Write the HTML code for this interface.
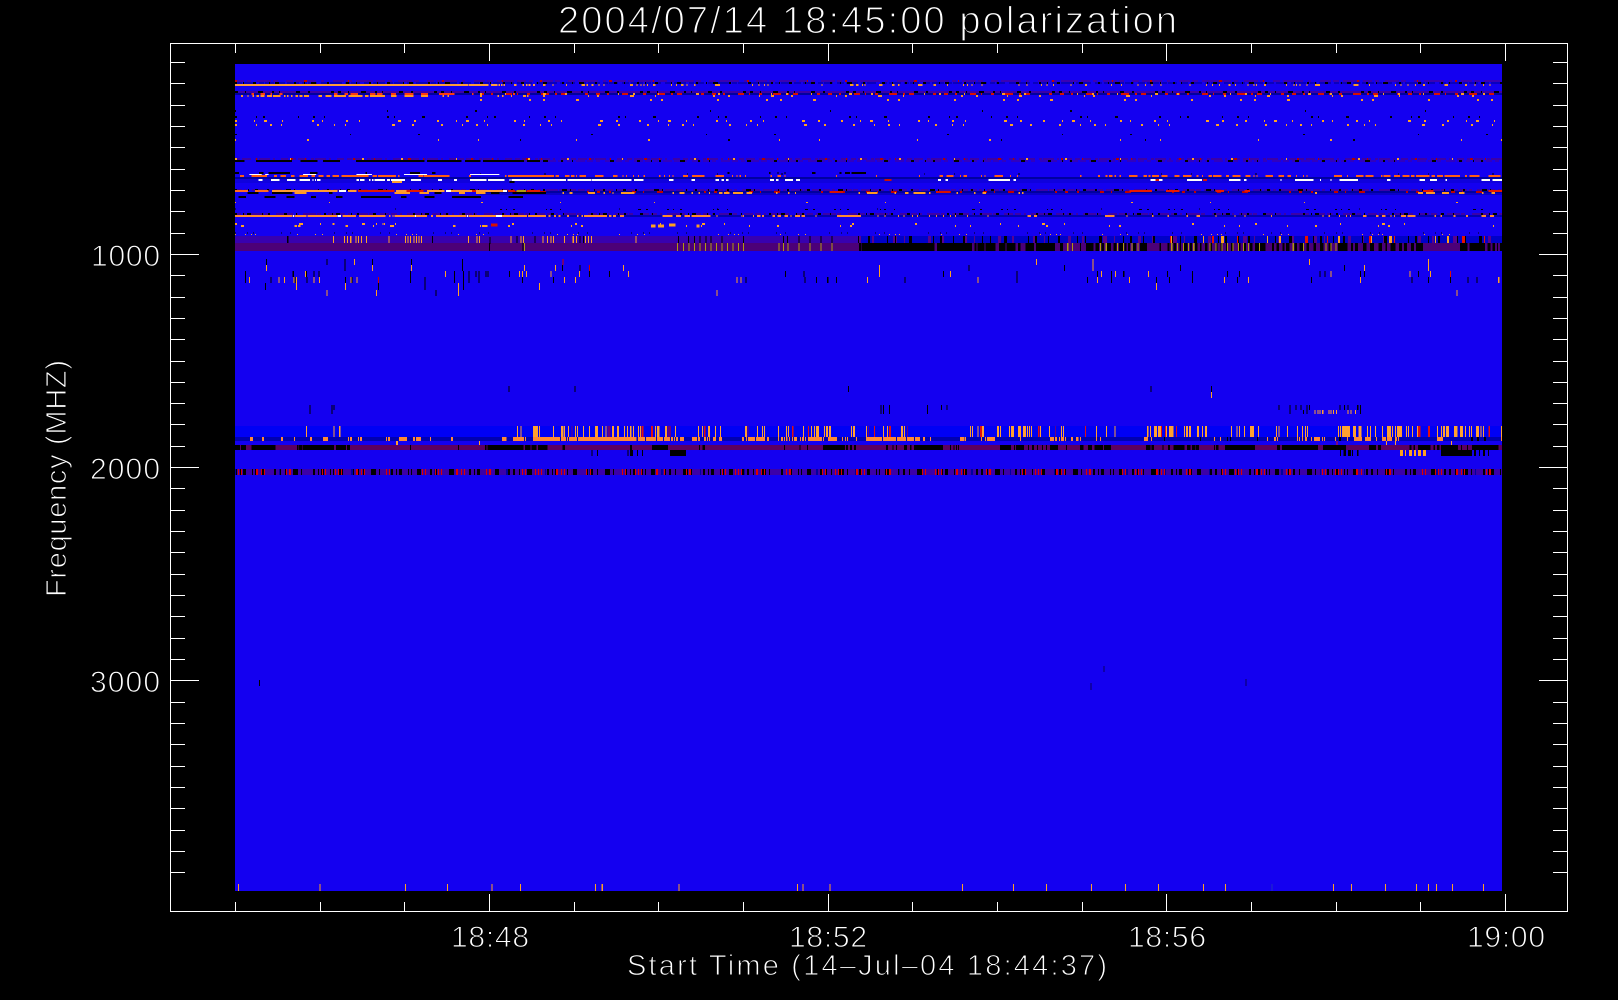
<!DOCTYPE html>
<html lang="en">
<head>
<meta charset="utf-8">
<title>2004/07/14 18:45:00 polarization</title>
<style>
html,body{margin:0;padding:0;background:#000;width:1618px;height:1000px;overflow:hidden}
svg{display:block}
text{font-family:"Liberation Sans",sans-serif;fill:#fff;stroke:#000;paint-order:normal}
</style>
</head>
<body>
<svg width="1618" height="1000" viewBox="0 0 1618 1000" xmlns="http://www.w3.org/2000/svg">
<rect width="1618" height="1000" fill="#000"/>
<g fill="none" shape-rendering="crispEdges">
<!-- plot base -->
<rect x="235" y="64" width="1267" height="827" fill="#1400f0"/>
<rect x="235" y="426" width="1267" height="11" fill="#0000f5"/>
<rect x="235" y="437" width="1267" height="4" fill="#0000b0"/>
<rect x="235" y="177" width="1267" height="6" fill="#0c00d0" opacity=".6"/>
<rect x="235" y="236" width="623" height="7" fill="#3800b0"/>
<rect x="235" y="243" width="1267" height="8" fill="#4c0078"/>
<rect x="235" y="445" width="1267" height="5" fill="#5c0060"/>
<rect x="235" y="469" width="1267" height="6" fill="#3c00a8"/>

<!-- top speckled rows, full width -->
<path d="M235 81H1502" stroke="#3a00b4" stroke-width="2" stroke-dasharray="9 3 4 6 14 2 5 8 7 3 20 5 3 9 11 2 6 4 17 3"/>
<path d="M235 83H1502" stroke="#0800c0" stroke-width="2" stroke-dasharray="7 2 12 3 5 1 9 4"/>
<path d="M235 83H1502" stroke="#000" stroke-width="2" stroke-dasharray="2 6 1 9 3 13 1 5 4 15 2 8 1 6 5 11 2 17 3 7 1 12"/>
<path d="M235 81H1502" stroke="#c00000" stroke-width="2" stroke-dasharray="2 67 3 41 1 93 2 58 1 37"/>
<path d="M235 92H1502" stroke="#3c00a8" stroke-width="2"/>
<path d="M235 92H1502" stroke="#000" stroke-width="2" stroke-dasharray="3 7 1 12 5 9 2 5 1 16 4 8 2 21 3 4"/>
<path d="M235 94H1502" stroke="#0000a0" stroke-width="2"/>
<path d="M480 94H1502" stroke="#d81000" stroke-width="2" stroke-dasharray="4 7 2 13 6 5 1 9 3 11 8 6 2 4 5 19 3 8"/>
<path d="M480 94H1502" stroke="#ff9922" stroke-width="2" stroke-dasharray="2 23 1 37 3 19 2 51 1 14"/>
<path d="M480 96H1502" stroke="#ff9922" stroke-width="2" stroke-dasharray="2 29 1 11 3 17 2 43 1 8 2 31 4 21 1 57 2 13"/>
<path d="M480 100H1502" stroke="#ff9922" stroke-width="2" stroke-dasharray="2 47 2 12 2 31 3 71 2 9 2 54"/>
<path d="M235 111H1502" stroke="#000" stroke-width="2" stroke-dasharray="1 151 1 87 2 233 1 119"/>
<path d="M235 117H1502" stroke="#000" stroke-width="2" stroke-dasharray="2 19 1 6 2 33 1 14 2 9 1 62 2 5 1 27 3 41"/>
<path d="M235 121H1502" stroke="#ffa020" stroke-width="2" stroke-dasharray="2 17 1 9 3 15 1 29 2 8 1 23 2 11 1 38 3 13 2 21"/>
<path d="M235 125H1502" stroke="#ffa020" stroke-width="2" stroke-dasharray="2 19 1 13 2 9 1 35 2 15 1 10 1 46 3 17 2 27"/>
<path d="M235 134.500H1502" stroke="#000" stroke-width="1" stroke-dasharray="2 113 1 67 2 171"/>
<path d="M235 140H1502" stroke="#ffa020" stroke-width="2" stroke-dasharray="1 71 2 129 1 39 1 97"/>
<path d="M520 140H1502" stroke="#000" stroke-width="2" stroke-dasharray="1 207 2 271 1 143"/>
<path d="M235 159H1502" stroke="#3c00a8" stroke-width="2" stroke-dasharray="5 2 9 4 3 1 11 3 2 6 7 3"/>
<path d="M235 159H1502" stroke="#b00000" stroke-width="2" stroke-dasharray="2 19 1 33 3 12 1 47"/>
<path d="M235 159H1502" stroke="#ffa020" stroke-width="2" stroke-dasharray="2 53 1 71 2 37"/>
<path d="M500 161H1502" stroke="#3000c0" stroke-width="2" stroke-dasharray="6 3 4 5 9 2"/>
<path d="M500 161H1502" stroke="#000" stroke-width="2" stroke-dasharray="3 11 1 7 2 19 5 13 2 9 1 37 4 23"/>
<path d="M235 178H1502" stroke="#0000a0" stroke-width="2"/>
<path d="M480 174H1502" stroke="#000" stroke-width="1" stroke-dasharray="1 63 2 141 1 29"/>
<path d="M235 190H1502" stroke="#3c00a8" stroke-width="2" stroke-dasharray="7 2 3 5 12 1 5 3 9 2"/>
<path d="M235 190H1502" stroke="#000" stroke-width="2" stroke-dasharray="2 11 1 6 3 9 2 17 5 3 1 23 1 8"/>
<path d="M480 192H1502" stroke="#0000a0" stroke-width="2"/>
<path d="M480 192H1502" stroke="#c00000" stroke-width="2" stroke-dasharray="3 9 2 21 4 7 1 13 6 41 2 8"/>
<path d="M480 194H1502" stroke="#0a00c8" stroke-width="2"/>
<path d="M235 202.500H1502" stroke="#ffa020" stroke-width="1" stroke-dasharray="1 93 1 151 2 77"/>
<path d="M235 209H1502" stroke="#000" stroke-width="1" stroke-dasharray="1 159 1 223 1 97"/>
<path d="M235 214H1502" stroke="#3c00a8" stroke-width="2" stroke-dasharray="6 3 2 5 13 1 4 7 9 2"/>
<path d="M235 214H1502" stroke="#000" stroke-width="2" stroke-dasharray="2 6 1 3 4 11 1 5 2 14 3 9 1 27"/>
<path d="M480 216H1502" stroke="#0000a8" stroke-width="2" opacity=".9"/>
<path d="M500 209.500H1502" stroke="#000" stroke-width="1" stroke-dasharray="2 4 1 6 2 31 1 3 2 8 1 77 3 5 2 19"/>
<path d="M235 224H1502" stroke="#ffa020" stroke-width="2" stroke-dasharray="2 83 1 41 3 19 1 127 2 61"/>
<path d="M480 226H1502" stroke="#ffa020" stroke-width="2" stroke-dasharray="1 27 2 61 1 9 2 103 1 14 1 47"/>
<path d="M235 233H1502" stroke="#000" stroke-width="1" stroke-dasharray="1 11 1 5 1 27 1 8 1 43"/>
<path d="M235 234.500H1502" stroke="#ffa020" stroke-width="1" stroke-dasharray="1 9 1 5 1 3 1 41 1 17 1 6 1 73"/>

<!-- chunky left-side rows in zoom units -->
<g transform="matrix(.34439 0 0 1 0 0)">
<path d="M682 85H1360M1362 85h56M1425 85h20M1448 85h4M1455 85h4M1462 85h4M1493 85h7M1517 85h4M1528 85h4M1535 85h5M1548 85h6" stroke="#ff9a3c" stroke-width="2"/>
<path d="M730 94h8M757 94h13M785 94h5M812 94h8M970 94h10M1000 94h10M1018 94h22M1075 94h15M1095 94h15M1135 94h15M1175 94h25M1222 94h21M1275 94h45M1370 94h5M1490 94h5" stroke="#ff3a10" stroke-width="2"/>
<path d="M700 96h6M718 96h4M733 96h5M745 96h7M757 96h11M775 96h15M793 96h22M825 96h4M833 96h4M845 96h5M858 96h7M870 96h8M883 96h14M925 96h10M945 96h17M970 96h35M1012 96h40M1060 96h10M1075 96h43M1135 96h17M1175 96h25M1222 96h21M1285 96h4M1300 96h4M1445 96h4M1458 96h4M1530 96h4" stroke="#ff9922" stroke-width="2"/>
<path d="M682 161h28M743 161h105M873 161h49M938 161h49M1034 161h199M1240 161h100M1350 161h45M1402 161h118M1530 161h38" stroke="#000" stroke-width="2"/>
<path d="M682 173h12M752 173h13M780 173h62M900 173h22M1062 173h4M1190 173h30M1255 173h10" stroke="#000" stroke-width="2"/>
<path d="M724 174.500h36M770 174.500h10M880 174.500h38M1035 174.500h45M1173 174.500h67M1365 174.500h85" stroke="#fff" stroke-width="1"/>
<path d="M697 176h11M730 176h45M795 176h10M815 176h15M845 176h10M870 176h25M905 176h10M925 176h15M948 176h10M965 176h20M992 176h78M1082 176h13M1098 176h52M1155 176h5M1215 176h13M1230 176h75M1362 176h6M1467 176h3M1475 176h93" stroke="#ff5a14" stroke-width="2"/>
<path d="M750 180h12M787 180h25M833 180h25M870 180h30M907 180h4M915 180h3M920 180h10M1035 180h7M1045 180h13M1072 180h4M1080 180h4M1088 180h30M1124 180h8M1135 180h41M1193 180h29M1272 180h11M1318 180h9M1365 180h47M1417 180h48M1480 180h3M1485 180h83" stroke="#fff" stroke-width="2"/>
<path d="M1138 182h30" stroke="#ffa030" stroke-width="2"/>
<path d="M1480 182h14" stroke="#000" stroke-width="2"/>
<path d="M682 191h38M740 191h40" stroke="#ff6a20" stroke-width="2"/>
<path d="M790 191h190M1010 191h25M1150 191h30M1240 191h50M1310 191h60M1380 191h90" stroke="#ff9933" stroke-width="2"/>
<path d="M985 191h20M1295 191h15M1460 191h12" stroke="#fff" stroke-width="2"/>
<path d="M1040 191h20M1060 191h85M1180 191h50M1370 191h12M1475 191h20M1530 191h38" stroke="#e01800" stroke-width="2"/>
<path d="M1500 191h28" stroke="#b09a10" stroke-width="2"/>
<path d="M855 193h35M1145 193h45M1218 193h27M1333 193h17M1382 193h28" stroke="#ff9922" stroke-width="2"/>
<path d="M718 193h32M790 193h60M955 193h10M1262 193h20M1425 193h25M1488 193h80" stroke="#000" stroke-width="2"/>
<path d="M692 197h22M768 197h32M832 197h23M903 197h15M975 197h20M1048 197h87M1165 197h15M1232 197h30M1312 197h85M1476 197h42" stroke="#000" stroke-width="2"/>
<path d="M682 216h168M855 216h35M893 216h85M995 216h38M1042 216h78M1130 216h4M1140 216h3M1146 216h59M1208 216h32M1252 216h6M1266 216h89M1360 216h80M1458 216h72M1533 216h35" stroke="#ff8833" stroke-width="2"/>
<path d="M851 216h3M980 216h10M1205 216h3M1356 216h3M1440 216h18" stroke="#fff" stroke-width="2"/>
<path d="M868 224h12M965 224h7M1092 224h3M1110 224h3M1147 224h3" stroke="#ffa020" stroke-width="2"/>
<path d="M700 226h8M855 226h7M865 226h8M1003 226h7M1083 226h3M1132 226h12M1315 226h7M1400 226h16" stroke="#ffa020" stroke-width="2"/>
<path d="M1425 225h20" stroke="#d81000" stroke-width="3"/>
<!-- purple band bars -->
<path d="M967 239.500h3M999 239.500h3M1007 239.500h3M1017 239.500h3M1032 239.500h3M1040 239.500h3M1048 239.500h3M1063 239.500h3M1128 239.500h3M1176 239.500h3M1183 239.500h3M1191 239.500h3M1200 239.500h3M1208 239.500h3M1215 239.500h3M1222 239.500h3M1359 239.500h3M1383 239.500h3M1391 239.500h3M1482 239.500h3M1511 239.500h3M1518 239.500h3" stroke="#ffa020" stroke-width="7"/>
<path d="M834 239.500h3M1255 239.500h3M1421 240.500h3M1500 239.500h3M1552 239.500h3" stroke="#000" stroke-width="7"/>
<path d="M1420 247h3M1517 247h3" stroke="#000" stroke-width="8"/>
<path d="M1522 247h3" stroke="#b09a10" stroke-width="8"/>
<!-- vertical ticks under band -->
<path d="M1028 262h3" stroke="#ffa020" stroke-width="6"/>
<path d="M772 268h3M1080 268h3M1193 268h3M1522 268h3" stroke="#ffa020" stroke-width="6"/>
<path d="M886 274h3M1292 274h3M1507 274h3M1516 274h3M1527 274h3" stroke="#ffa020" stroke-width="6"/>
<path d="M723 280h3M808 280h3M825 280h3M852 280h3M859 280h3M910 280h3M926 280h3M1035 280h3M1018 280h3" stroke="#ffa020" stroke-width="6"/>
<path d="M859 286.500h3M1002 286.500h3M1330 286.500h3M1565 286.500h3" stroke="#ffa020" stroke-width="7"/>
<path d="M948 293h3M1092 293h3M1330 293h3" stroke="#ffa020" stroke-width="6"/>
<path d="M772 262h3M948 262h3M1000 262h3M1080 262h3M1193 262h3M1342 262h3" stroke="#000" stroke-width="6"/>
<path d="M1000 268h3M1342 268h3" stroke="#000" stroke-width="6"/>
<path d="M712 274h3M850 274h3M888 274h3M910 274h3M925 274h3M1190 274h3M1318 274h3M1345 274h3M1360 274h3M1380 274h3M1390 274h3M1410 274h3M1415 274h3M1478 274h3" stroke="#000" stroke-width="6"/>
<path d="M712 280h3M785 280h3M855 280h3M890 280h3M1002 280h3M1020 280h3M1190 280h3M1232 280h3M1318 280h3M1345 280h3M1360 280h3M1390 280h3M1516 280h3" stroke="#000" stroke-width="6"/>
<path d="M770 286.500h3M1098 286.500h3M1232 286.500h3M1345 286.500h3" stroke="#000" stroke-width="7"/>
<path d="M1265 293h3" stroke="#000" stroke-width="6"/>
<path d="M1098 280h3" stroke="#d00000" stroke-width="6"/>
<!-- mid band -->
<path d="M1476 389h3" stroke="#000" stroke-width="6"/>
<path d="M898 409.500h3M962 409.500h3" stroke="#000" stroke-width="9"/>
<path d="M968 407.500h3" stroke="#000" stroke-width="5"/>
<path d="M889 431.500h3M968 431.500h3M985 431.500h3M1501 431.500h3M1511 431.500h3M1548 431.500h14M1565 431.500h3" stroke="#ffa030" stroke-width="11"/>
<path d="M726 439h9M761 439h6M816 439h6M854 439h3M900 439h6M938 439h14M1010 439h3M1016 439h6M1040 439h3M1045 439h6M1121 439h3M1127 439h5M1159 439h23M1199 439h6M1208 439h14M1249 439h3M1310 439h5M1458 439h12M1490 439h32M1524 439h3M1548 439h20" stroke="#ff8833" stroke-width="4"/>
<path d="M1150 443h6M1391 443h3" stroke="#ffa030" stroke-width="4"/>
<path d="M682 447.500h15M700 447.500h15M730 447.500h70M862 447.500h5M868 447.500h10M880 447.500h90M976 447.500h29M1008 447.500h8M1190 447.500h3M1330 447.500h3M1408 447.500h5M1416 447.500h104M1525 447.500h15M1543 447.500h15M1562 447.500h6" stroke="#000" stroke-width="5"/>
<path d="M752 683h3" stroke="#000" stroke-width="6"/>
</g>

<g transform="matrix(.34439 0 0 1 540 0)">
<path d="M8 85h8M36 85h3M75 85h3M120 85h10M135 85h5M150 85h5M170 85h3M185 85h3M262 85h8M280 85h3M292 85h3M300 85h3M310 85h3M328 85h7M380 85h3M395 85h3M410 85h6M425 85h3M447 85h5M508 85h15M616 85h3M635 85h3M650 85h3M660 85h3M817 85h3M900 85h10M918 85h7M935 85h3M942 85h3M985 85h10M1022 85h8M1040 85h4M1098 85h12M1143 85h7M1182 85h3M1228 85h3M1240 85h3M1253 85h3M1282 85h3M1390 85h3M1412 85h3M1455 85h3M1470 85h3M1490 85h3M1540 85h3" stroke="#ff9922" stroke-width="2"/>
<path d="M0 176h40M45 176h10M72 176h13M90 176h10M105 176h3M115 176h18M160 176h25M212 176h13M240 176h3M250 176h3M270 176h3M285 176h3M300 176h5M345 176h5M360 176h3M375 176h3M385 176h3M415 176h15M442 176h36M510 176h25M558 176h3M570 176h3M580 176h3M595 176h3M670 176h3M690 176h10M710 176h3M860 176h3M975 176h3M1100 176h3M1160 176h10M1180 176h20M1220 176h3M1230 176h10M1280 176h3M1290 176h3M1320 176h25M1365 176h3M1385 176h3" stroke="#ff5a14" stroke-width="2"/>
<path d="M0 180h75M80 180h68M150 180h115M273 180h27M375 180h13M440 180h10M510 180h10M527 180h8M540 180h8M668 180h12M685 180h8M712 180h23M743 180h12M1155 180h10M1178 180h7M1303 180h62M1375 180h7" stroke="#fff" stroke-width="2"/>
<path d="M1000 180h20" stroke="#d01000" stroke-width="2"/>
<path d="M545 173h5M665 173h5M690 173h3M710 173h3M790 173h10M870 173h5M885 173h15M905 173h42" stroke="#000" stroke-width="2"/>
<path d="M65 193h4M85 193h10M140 193h20M185 193h4M210 193h4M235 193h40M385 193h4M405 193h15M440 193h4M460 193h4M490 193h4M520 193h10M535 193h15M560 193h30M600 193h15M685 193h4M720 193h4M740 193h4M925 193h4M950 193h30M1030 193h4M1060 193h10M1085 193h35M1130 193h4M1210 193h4M1260 193h4M1285 193h10M1390 193h4M1400 193h4" stroke="#ff9922" stroke-width="2"/>
<path d="M0 193h18" stroke="#000" stroke-width="2"/>
<path d="M840 192h40M1150 192h40" stroke="#d81000" stroke-width="2"/>
<path d="M0 216h18M24 216h6M40 216h6M54 216h6M78 216h6M108 216h4M120 216h5M128 216h67M200 216h8M212 216h8M232 216h12M355 216h30M395 216h15M420 216h15M440 216h55M512 216h3M585 216h3M590 216h3M618 216h3M630 216h10M645 216h5M675 216h7M690 216h10M710 216h10M727 216h3M740 216h15M760 216h10M800 216h3M862 216h70M980 216h3M1000 216h3M1040 216h3M1055 216h3M1080 216h3M1095 216h3M1130 216h3M1150 216h3M1170 216h3M1190 216h3M1205 216h3M1240 216h3M1300 216h3M1415 216h10M1435 216h8" stroke="#ff8833" stroke-width="2"/>
<path d="M322 226h14M342 226h18M375 225h18M455 226h8" stroke="#ffa020" stroke-width="3"/>
<!-- purple band -->
<path d="M7 239.500h3M20 239.500h3M30 239.500h3M38 239.500h3M70 239.500h3M95 239.500h3M105 239.500h3M130 239.500h3M140 239.500h3M148 239.500h3M277 239.500h3" stroke="#ffa020" stroke-width="7"/>
<path d="M115 239.500h3M125 239.500h3M400 239.500h3M430 239.500h3M447 239.500h3M463 239.500h3M480 239.500h3M495 239.500h3M527 239.500h3M590 239.500h3M705 239.500h3M717 239.500h3M750 239.500h3M782 239.500h3M815 239.500h3M847 239.500h3" stroke="#000" stroke-width="7"/>
<path d="M398 247h3M415 247h3M431 247h3M447 247h3M463 247h3M479 247h3M495 247h3M511 247h3M527 247h3M543 247h3M559 247h3M575 247h3M590 247h3M692 247h3M705 247h3M718 247h3M750 247h3M782 247h3M815 247h3M846 247h3" stroke="#b09a10" stroke-width="8"/>
<path d="M926 247h8M935 247h210M1153 247h97M1250 247h4M1262 247h5M1270 247h20M1293 247h30M1333 247h18M1355 247h25M1388 247h7M1410 247h25M1440 247h55M1510 247h8" stroke="#000" stroke-width="8"/>
<path d="M1530 247h4M1545 247h3" stroke="#b09a10" stroke-width="8"/>
<!-- vertical ticks -->
<path d="M1440 262h3" stroke="#ffa020" stroke-width="6"/>
<path d="M44 268h3M241 268h3M984 268h3" stroke="#ffa020" stroke-width="6"/>
<path d="M30 274h3M113 274h3M256 274h3M984 274h3M1191 274h3" stroke="#ffa020" stroke-width="6"/>
<path d="M70 280h3M102 280h3M570 280h3M582 280h3M950 280h3M1270 280h3" stroke="#ffa020" stroke-width="6"/>
<path d="M512 293h3" stroke="#ffa020" stroke-width="6"/>
<path d="M64 268h3M114 268h3M1244 268h3M1522 268h3" stroke="#000" stroke-width="6"/>
<path d="M142 274h3M200 274h3M712 274h3M765 274h3M1170 274h3M1383 274h3" stroke="#000" stroke-width="6"/>
<path d="M38 280h3M596 280h3M768 280h3M802 280h3M834 280h3M860 280h3M1058 280h3M1383 280h3" stroke="#000" stroke-width="6"/>
<path d="M65 262h3M142 268h3" stroke="#d00000" stroke-width="6"/>
<!-- mid band -->
<path d="M100 389h3M894 389h3" stroke="#000" stroke-width="6"/>
<path d="M988 409.500h3M996 409.500h3M1013 409.500h3M1124 409.500h3" stroke="#000" stroke-width="9"/>
<path d="M1165 407.500h3M1180 407.500h3" stroke="#000" stroke-width="5"/>
<path d="M38 431.500h3M61 431.500h7M70 431.500h3M81 431.500h3M102 431.500h3M108 431.500h3M125 431.500h3M142 431.500h3M160 431.500h8M180 431.500h3M190 431.500h3M209 431.500h6M224 431.500h5M244 431.500h3M253 431.500h3M262 431.500h3M270 431.500h3M285 431.500h3M290 431.500h3M334 431.500h3M340 431.500h7M363 431.500h6M392 431.500h3M459 431.500h3M470 431.500h3M488 431.500h6M508 431.500h3M522 431.500h3M595 431.500h6M630 431.500h3M645 431.500h3M650 431.500h3M691 431.500h3M714 431.500h3M720 431.500h3M764 431.500h3M787 431.500h3M796 431.500h3M801 431.500h9M825 431.500h3M830 431.500h6M839 431.500h6M903 431.500h3M909 431.500h6M947 431.500h3M996 431.500h3M1008 431.500h3M1048 431.500h6M1057 431.500h3M1249 431.500h3M1255 431.500h3M1270 431.500h3M1283 431.500h6M1327 431.500h6M1336 431.500h3M1362 431.500h3M1368 431.500h8M1388 431.500h8M1402 431.500h9M1414 431.500h3M1420 431.500h3M1426 431.500h3M1452 431.500h3M1478 431.500h3M1513 431.500h3M1519 431.500h3" stroke="#ffa030" stroke-width="11"/>
<path d="M295 431.500h6M322 431.500h6M476 431.500h4M732 431.500h4M778 431.500h3M970 431.500h3M1013 431.500h6M1277 431.500h6M1446 431.500h4" stroke="#e01010" stroke-width="11"/>
<path d="M92 431.500h3M196 431.500h8M370 431.500h10M603 431.500h3M952 431.500h3M1066 431.500h3M1495 431.500h3" stroke="#6a0080" stroke-width="11"/>
<path d="M0 439h58M61 439h14M78 439h4M84 439h23M110 439h170M285 439h20M308 439h29M340 439h17M360 439h17M380 439h6M389 439h3M395 439h6M407 439h11M441 439h15M459 439h6M476 439h6M485 439h3M491 439h3M502 439h9M520 439h8M587 439h5M598 439h3M604 439h20M627 439h26M659 439h6M691 439h3M700 439h6M709 439h3M715 439h3M723 439h3M732 439h3M738 439h8M755 439h3M761 439h6M770 439h3M778 439h41M822 439h3M836 439h26M877 439h3M886 439h3M891 439h3M918 439h3M947 439h46M996 439h38M1037 439h26M1066 439h20M1089 439h14M1112 439h6M1132 439h3M1220 439h12M1234 439h3M1281 439h3M1292 439h3M1298 439h23M1394 439h3M1481 439h12M1495 439h6M1507 439h3M1513 439h9M1524 439h3M1542 439h6M1557 439h6" stroke="#ff8833" stroke-width="4"/>
<path d="M0 447.500h22M66 447.500h7M262 447.500h5M325 447.500h47M462 447.500h3M472 447.500h7M709 447.500h3M753 447.500h3M775 447.500h3M822 447.500h64M888 447.500h6M900 447.500h6M912 447.500h6M1005 447.500h6M1023 447.500h3M1034 447.500h3M1057 447.500h9M1075 447.500h3M1086 447.500h84M1191 447.500h3M1200 447.500h3M1208 447.500h3M1214 447.500h3M1336 447.500h32M1376 447.500h3M1382 447.500h23M1417 447.500h3M1429 447.500h5M1443 447.500h3M1458 447.500h3M1469 447.500h3M1481 447.500h23M1527 447.500h3" stroke="#000" stroke-width="5"/>
<path d="M149 453h3M166 453h3M254 453h3M261 453h9M282 453h3M296 453h3M377 453h47" stroke="#000" stroke-width="6"/>
</g>

<g transform="matrix(.3431 0 0 1 1080 0)">
<path d="M15 85h5M90 85h3M120 85h3M167 85h3M190 85h3M208 85h3M235 85h3M319 85h3M367 85h3M385 85h3M405 85h3M433 85h5M452 85h3M488 85h3M505 85h3M513 85h3M537 85h5M600 85h3M622 85h3M630 85h3M640 85h3M660 85h3M685 85h15M797 85h15M842 85h3M918 85h3M934 85h3M955 85h3M977 85h3M1000 85h5M1063 85h9M1122 85h6M1150 85h3M1175 85h3M1193 85h3" stroke="#ff9922" stroke-width="2"/>
<path d="M0 176h5M52 176h6M75 176h5M85 176h10M100 176h5M115 176h5M143 176h25M185 176h10M200 176h5M210 176h20M238 176h17M275 176h15M300 176h25M340 176h5M355 176h3M375 176h10M388 176h25M425 176h10M445 176h23M482 176h15M505 176h3M515 176h3M540 176h22M578 176h17M605 176h10M630 176h3M650 176h3M660 176h3M740 176h23M778 176h3M805 176h22M832 176h23M878 176h3M885 176h20M915 176h17M940 176h20M965 176h10M980 176h38M1025 176h10M1040 176h18M1062 176h46M1122 176h6M1135 176h30M1190 176h35" stroke="#ff5a14" stroke-width="2"/>
<path d="M205 180h35M312 180h43M435 180h33M478 180h7M585 180h3M627 180h53M700 180h3M730 180h3M757 180h53M895 180h10M990 180h15M1020 180h20M1065 180h5M1170 180h25M1202 180h28" stroke="#fff" stroke-width="2"/>
<path d="M358 180h12M220 180h10" stroke="#e01000" stroke-width="2"/>
<path d="M145 191h65M250 191h40M395 191h25M480 191h15M1000 191h30M1190 191h40" stroke="#e81800" stroke-width="2"/>
<path d="M985 193h15M1008 193h27M1055 193h20M1105 193h15M1172 193h4M1200 193h10M685 193h6" stroke="#ff9922" stroke-width="2"/>
<path d="M73 216h27M135 216h4M210 216h4M255 216h4M310 216h5M340 216h10M395 216h3M450 216h3M480 216h3M557 216h3M707 216h3M725 216h3M755 216h3M775 216h3M787 216h3M825 216h10M862 216h8M880 216h10M905 216h3M915 216h3M935 216h15M955 216h23M1033 216h5M1050 216h5M1088 216h7M1125 216h6M1170 216h13M1195 216h12" stroke="#ff8833" stroke-width="2"/>
<!-- purple / black band -->
<path d="M277 239.500h18M770 239.500h8M955 239.500h20M1055 239.500h10M795 239.500h10M560 239.500h6M645 239.500h4M660 239.500h4M900 239.500h3M1135 239.500h4" stroke="#ffa020" stroke-width="7"/>
<path d="M510 239.500h10M605 239.500h10M735 239.500h5M867 239.500h8M995 239.500h8M1087 239.500h13M1190 239.500h5" stroke="#e81000" stroke-width="7"/>
<path d="M190 239.500h10M240 239.500h4M470 239.500h6" stroke="#000" stroke-width="7"/>
<path d="M0 247h3M17 247h23M45 247h10M62 247h8M78 247h12M98 247h8M114 247h12M130 247h6M140 247h6M155 247h8M175 247h20M232 247h4M255 247h6M272 247h8M290 247h4M302 247h12M320 247h6M335 247h8M350 247h4M365 247h6M378 247h6M395 247h6M410 247h6M425 247h5M440 247h6M460 247h8M478 247h6M495 247h8M510 247h30M560 247h6M572 247h8M590 247h6M600 247h10M625 247h8M640 247h10M660 247h8M680 247h8M700 247h10M725 247h6M752 247h28M790 247h6M802 247h8M825 247h10M845 247h12M870 247h10M890 247h5M905 247h15M930 247h8M945 247h8M965 247h8M980 247h20M1108 247h22M1135 247h45M1188 247h8M1202 247h8M1215 247h4M1224 247h6" stroke="#000" stroke-width="8"/>
<path d="M58 247h3M75 247h3M108 247h3M125 247h3M150 247h3M168 247h3M265 247h4M283 247h3M300 247h3M315 247h3M330 247h3M378 247h3M395 247h3M412 247h3M428 247h3M445 247h3M460 247h3M475 247h3M490 247h3M522 247h3M620 247h3M650 247h3M715 247h3M730 247h3M745 247h3" stroke="#b09a10" stroke-width="8"/>
<!-- vertical ticks -->
<path d="M36 265h3M1014 265h3" stroke="#ffa020" stroke-width="12"/>
<path d="M668 262h3" stroke="#ffa020" stroke-width="6"/>
<path d="M828 268h3" stroke="#ffa020" stroke-width="6"/>
<path d="M61 274h3M102 274h3M198 274h3M730 274h3M960 274h3M1020 274h3" stroke="#ffa020" stroke-width="6"/>
<path d="M50 280h3M143 280h3M420 280h3M490 280h3M816 280h3M1219 280h3" stroke="#ffa020" stroke-width="6"/>
<path d="M222 286.500h3" stroke="#ffa020" stroke-width="7"/>
<path d="M1097 293h3" stroke="#ffa020" stroke-width="6"/>
<path d="M292 268h3M770 268h3" stroke="#000" stroke-width="6"/>
<path d="M50 274h3M90 274h3M126 274h3M254 274h3M326 274h3M428 274h3M463 274h3M698 274h3M712 274h3M816 274h3M828 274h3M985 274h3" stroke="#000" stroke-width="6"/>
<path d="M20 280h3M90 280h3M222 280h3M260 280h3M326 280h3M458 280h3M673 280h3M966 280h3M1014 280h3M1078 280h3M1129 280h3M1155 280h3" stroke="#000" stroke-width="6"/>
<path d="M1078 274h3" stroke="#e01000" stroke-width="6"/>
<!-- mid band -->
<path d="M205 389h3M382 389h3" stroke="#000" stroke-width="6"/>
<path d="M382 395h3" stroke="#ffa020" stroke-width="6"/>
<path d="M578 407.500h3M610 407.500h3M628 407.500h3M642 407.500h3M660 407.500h3M668 407.500h3M756 407.500h3M770 407.500h3M780 407.500h3M808 407.500h3M816 407.500h3" stroke="#000" stroke-width="5"/>
<path d="M610 412h3M650 412h3M660 412h3M816 412h3" stroke="#000" stroke-width="4"/>
<path d="M684 412h3M692 412h3M698 412h3M706 412h3M724 412h3M730 412h3M738 412h3M746 412h3M780 412h3M788 412h3M802 412h3" stroke="#ffa030" stroke-width="4"/>
<path d="M47 431.500h3M76 431.500h3M100 431.500h3M196 431.500h3M204 431.500h3M215 431.500h10M228 431.500h8M251 431.500h3M260 431.500h12M303 431.500h3M309 431.500h6M318 431.500h6M341 431.500h6M356 431.500h3M364 431.500h6M440 431.500h3M456 431.500h3M463 431.500h3M478 431.500h3M495 431.500h12M519 431.500h3M571 431.500h3M578 431.500h3M603 431.500h3M632 431.500h3M647 431.500h3M656 431.500h3M662 431.500h3M752 431.500h3M758 431.500h3M764 431.500h8M772 431.500h15M796 431.500h9M811 431.500h9M836 431.500h3M845 431.500h3M860 431.500h3M880 431.500h3M895 431.500h11M909 431.500h3M918 431.500h3M924 431.500h14M950 431.500h3M956 431.500h3M968 431.500h3M982 431.500h3M1040 431.500h3M1052 431.500h3M1058 431.500h6M1067 431.500h9M1090 431.500h10M1108 431.500h8M1122 431.500h3M1134 431.500h3M1140 431.500h3M1154 431.500h9M1167 431.500h3M1175 431.500h3M1227 431.500h3" stroke="#ffa030" stroke-width="11"/>
<path d="M15 431.500h3M236 431.500h3M248 431.500h3M280 431.500h3M985 431.500h8M1014 431.500h6M1190 431.500h5" stroke="#e01010" stroke-width="11"/>
<path d="M0 439h3M47 439h3M58 439h3M187 439h11M207 439h3M391 439h3M408 439h3M545 439h3M565 439h6M574 439h3M632 439h3M638 439h3M647 439h3M656 439h6M673 439h3M682 439h17M705 439h3M711 439h3M743 439h3M778 439h3M799 439h23M831 439h17M863 439h3M880 439h12M895 439h14M918 439h6M927 439h3M1040 439h18M1227 439h3" stroke="#ff8833" stroke-width="4"/>
<path d="M245 439h3M350 439h3M428 439h3M437 439h3M516 439h3M755 439h5M1140 439h5M1157 439h6M1177 439h6" stroke="#000" stroke-width="4"/>
<path d="M892 443h3M918 443h3M1081 443h3" stroke="#ffa030" stroke-width="4"/>
<path d="M748 443h3" stroke="#e01010" stroke-width="4"/>
<path d="M0 447.500h10M23 447.500h12M42 447.500h25M70 447.500h20M192 447.500h13M208 447.500h8M240 447.500h3M256 447.500h6M272 447.500h32M312 447.500h10M326 447.500h9M337 447.500h10M391 447.500h3M397 447.500h7M423 447.500h87M574 447.500h9M589 447.500h105M708 447.500h67M842 447.500h21M869 447.500h8M961 447.500h5M972 447.500h5M985 447.500h36M1031 447.500h3M1040 447.500h8M1052 447.500h50M1110 447.500h3M1128 447.500h3M1142 447.500h78" stroke="#000" stroke-width="5"/>
<path d="M758 453h3M768 453h7M781 453h9M793 453h3M808 453h3M1052 453h90M1148 453h6M1163 453h3M1175 453h5M1189 453h3" stroke="#000" stroke-width="6"/>
<path d="M933 453h9M947 453h3M959 453h9M973 453h6M985 453h9M1000 453h8" stroke="#ffa020" stroke-width="6"/>
</g>

<!-- right portion of band row 236-243 mix -->
<path d="M858 239.500H1502" stroke="#0000c8" stroke-width="7"/>
<path d="M858 239.500H1502" stroke="#5a0090" stroke-width="7" stroke-dasharray="3 11 2 19 4 7 1 23"/>
<path d="M858 239.500H1502" stroke="#000" stroke-width="7" stroke-dasharray="1 9 2 17 1 7 1 13 3 21 1 6 2 11"/>
<path d="M1170 239.500H1502" stroke="#ffa020" stroke-width="7" stroke-dasharray="2 31 1 17 3 43 1 11 2 57"/>
<path d="M1170 239.500H1502" stroke="#e81000" stroke-width="7" stroke-dasharray="1 41 2 23 1 67 3 19"/>

<!-- row 469-475 stripes -->
<path d="M235 472H1502" stroke="#000" stroke-width="6" stroke-dasharray="2 3 1 2 3 6 1 2 1 5 4 9 2 3 2 4 1 7 5 3 1 11"/>
<path d="M235 472H1502" stroke="#e00000" stroke-width="6" stroke-dasharray="1 2 1 2 1 14 2 3 1 2 1 21 1 2 2 31 1 2 1 9"/>
<path d="M235 472H1502" stroke="#0000a0" stroke-width="6" stroke-dasharray="1 43 1 71 2 37"/>

<!-- orange ticks at bottom -->
<g transform="matrix(.5165 0 0 1 0 0)">
<path d="M461 887.500h2M619 887.500h2M784 887.500h2M865 887.500h2M952 887.500h2M1007 887.500h2M1152 887.500h2M1165 887.500h2M1314 887.500h2M1543 887.500h2M1554 887.500h2" stroke="#ffa020" stroke-width="7"/>
</g>
<g transform="matrix(.5153 0 0 1 810 0)">
<path d="M38 887.500h2M295 887.500h2M394 887.500h2M458 887.500h2M545 887.500h2M611 887.500h2M675 887.500h2M763 887.500h2M805 887.500h2M1015 887.500h2M1050 887.500h2M1116 887.500h2M1176 887.500h2M1199 887.500h2M1215 887.500h2M1246 887.500h2M1306 887.500h2" stroke="#ffa020" stroke-width="7"/>
<path d="M896 887.500h2" stroke="#2030c0" stroke-width="7"/>
</g>

<!-- scattered dark ticks low in plot -->
<path d="M1091 683v7M1104 666v6M1246 679v7" stroke="#0a0060" stroke-width="1"/>

<!-- frame -->
<path d="M170.500 43.500H1567.500V911.500H170.500Z" stroke="#fff" stroke-width="1"/>
<path d="M170 62.500h15M170 83.500h15M170 105.500h15M170 126.500h15M170 147.500h15M170 169.500h15M170 190.500h15M170 211.500h15M170 233.500h15M170 254.500h29M170 275.500h15M170 297.500h15M170 318.500h15M170 339.500h15M170 361.500h15M170 382.500h15M170 403.500h15M170 424.500h15M170 446.500h15M170 467.500h29M170 488.500h15M170 510.500h15M170 531.500h15M170 552.500h15M170 574.500h15M170 595.500h15M170 616.500h15M170 638.500h15M170 659.500h15M170 680.500h29M170 702.500h15M170 723.500h15M170 744.500h15M170 766.500h15M170 787.500h15M170 808.500h15M170 830.500h15M170 851.500h15M170 872.500h15" stroke="#fff" stroke-width="1"/>
<path d="M1567 62.500h-14M1567 83.500h-14M1567 105.500h-14M1567 126.500h-14M1567 147.500h-14M1567 169.500h-14M1567 190.500h-14M1567 211.500h-14M1567 233.500h-14M1567 254.500h-28M1567 275.500h-14M1567 297.500h-14M1567 318.500h-14M1567 339.500h-14M1567 361.500h-14M1567 382.500h-14M1567 403.500h-14M1567 424.500h-14M1567 446.500h-14M1567 467.500h-28M1567 488.500h-14M1567 510.500h-14M1567 531.500h-14M1567 552.500h-14M1567 574.500h-14M1567 595.500h-14M1567 616.500h-14M1567 638.500h-14M1567 659.500h-14M1567 680.500h-28M1567 702.500h-14M1567 723.500h-14M1567 744.500h-14M1567 766.500h-14M1567 787.500h-14M1567 808.500h-14M1567 830.500h-14M1567 851.500h-14M1567 872.500h-14" stroke="#fff" stroke-width="1"/>
<path d="M235.500 44v9M320.500 44v9M404.500 44v9M489.500 44v17M574.500 44v9M658.500 44v9M743.500 44v9M828.500 44v17M912.500 44v9M997.500 44v9M1082.500 44v9M1166.500 44v17M1251.500 44v9M1336.500 44v9M1420.500 44v9M1505.500 44v17" stroke="#fff" stroke-width="1"/>
<path d="M235.500 911v-9M320.500 911v-9M404.500 911v-9M489.500 911v-17M574.500 911v-9M658.500 911v-9M743.500 911v-9M828.500 911v-17M912.500 911v-9M997.500 911v-9M1082.500 911v-9M1166.500 911v-17M1251.500 911v-9M1336.500 911v-9M1420.500 911v-9M1505.500 911v-17" stroke="#fff" stroke-width="1"/>
</g>

<!-- labels -->
<g>
<text x="558" y="33" font-size="38" stroke-width="1.3" textLength="619" lengthAdjust="spacing">2004/07/14 18:45:00 polarization</text>
<text x="91" y="266" font-size="30" stroke-width="1" textLength="69" lengthAdjust="spacing">1000</text>
<text x="90" y="479" font-size="30" stroke-width="1" textLength="70" lengthAdjust="spacing">2000</text>
<text x="90" y="692" font-size="30" stroke-width="1" textLength="70" lengthAdjust="spacing">3000</text>
<text x="451" y="947" font-size="30" stroke-width="1" textLength="78" lengthAdjust="spacing">18:48</text>
<text x="789" y="947" font-size="30" stroke-width="1" textLength="78" lengthAdjust="spacing">18:52</text>
<text x="1128" y="947" font-size="30" stroke-width="1" textLength="78" lengthAdjust="spacing">18:56</text>
<text x="1467" y="947" font-size="30" stroke-width="1" textLength="78" lengthAdjust="spacing">19:00</text>
<text x="627" y="975" font-size="29" stroke-width="1" textLength="480" lengthAdjust="spacing">Start Time (14–Jul–04 18:44:37)</text>
<text transform="translate(66 597) rotate(-90)" x="0" y="0" font-size="29" stroke-width="1" textLength="237" lengthAdjust="spacing">Frequency (MHZ)</text>
</g>
</svg>
</body>
</html>
